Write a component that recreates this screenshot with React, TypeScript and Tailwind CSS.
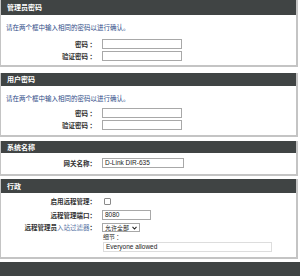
import React from "react"

const font = { fontFamily: '"Noto Sans CJK SC", "Liberation Sans", sans-serif' }

function Header({ title, h }: { title: string; h: string }) {
  return (
    <div className={`${h} bg-[#404444] flex items-center pl-[6px] text-white text-[7px] font-bold leading-none`}>
      {title}
    </div>
  )
}

function Row({ label, children, className = "" }: { label: React.ReactNode; children: React.ReactNode; className?: string }) {
  return (
    <div className={`flex items-center ${className}`}>
      <div className="w-[97px] text-right pr-[2px] text-[6.5px] font-bold text-[#333] leading-none whitespace-nowrap">{label}</div>
      <div className="pl-[4px] flex items-center">{children}</div>
    </div>
  )
}

function Input({ w = "w-[80px]", value = "" }: { w?: string; value?: string }) {
  return (
    <div className={`${w} h-[10px] border border-[#a8a8a8] bg-white flex items-center px-[2px] text-[6.5px] text-[#222] leading-none`} style={{ fontFamily: '"Liberation Sans", sans-serif' }}>
      {value}
    </div>
  )
}

function PasswordBox({ title, first }: { title: string; first?: boolean }) {
  return (
    <div className="w-[298px] border-l border-r-2 border-b-2 border-[#c4c4c4]">
      <Header title={title} h={first ? "h-[15px]" : "h-[13px]"} />
      <div className="pl-[5px] pt-[8px] text-[6.5px] leading-[9px] text-[#2d4a86] h-[17px]">
        请在两个框中输入相同的密码以进行确认。
      </div>
      <div className={first ? "pt-[7px]" : "pt-[5px]"}>
        <Row label="密码 ：">
          <Input />
        </Row>
        <Row label="验证密码 ：" className="mt-[2px]">
          <Input />
        </Row>
      </div>
      <div className={first ? "h-[4px]" : "h-[5px]"} />
    </div>
  )
}

export default function App() {
  return (
    <div className="w-[300px] h-[276px] bg-white overflow-hidden flex flex-col" style={font}>
      <PasswordBox title="管理员密码" first />
      <div className="h-[6px] shrink-0" />
      <PasswordBox title="用户密码" />
      <div className="h-[4px] shrink-0" />

      <div className="w-[298px] border-l border-r-2 border-b-2 border-[#c4c4c4]">
        <Header title="系统名称" h="h-[12px]" />
        <Row label="网关名称：" className="pt-[5px] pb-[6px]">
          <Input value="D-Link DIR-635" w="w-[82px]" />
        </Row>
      </div>
      <div className="h-[3px] shrink-0" />

      <div className="w-[298px] border-l border-r-2 border-b-2 border-[#c4c4c4]">
        <Header title="行政" h="h-[14px]" />
        <Row label="启用远程管理：" className="h-[17px]">
          <div className="w-[7px] h-[7px] border border-[#8a8a8a] bg-white ml-[2px] rounded-[1px]" />
        </Row>
        <Row label="远程管理端口：">
          <Input value="8080" w="w-[49px]" />
        </Row>
        <Row
          label={
            <span>
              远程管理员<span className="font-normal text-[#5a76a6]">入站过滤器</span>：
            </span>
          }
          className="mt-[3px]"
        >
          <div className="w-[38px] h-[9px] border border-[#a8a8a8] bg-white flex items-center justify-between px-[2px] text-[6px] text-[#222] leading-none">
            <span>允许全部</span>
            <svg width="5" height="4" viewBox="0 0 5 4">
              <path d="M0.5 0.8 L2.5 3 L4.5 0.8" fill="none" stroke="#222" strokeWidth="1.1" />
            </svg>
          </div>
        </Row>
        <div className="pl-[102px] mt-[1px] text-[6px] leading-[8px] text-[#333]">细节 ：</div>
        <div className="pl-[102px] mt-[1px]">
          <div className="w-[169px] h-[10px] border border-[#ddd] bg-white flex items-center px-[2px] text-[6.5px] text-[#222] leading-none" style={{ fontFamily: '"Liberation Sans", sans-serif' }}>
            Everyone allowed
          </div>
        </div>
        <div className="h-[5px]" />
      </div>

      <div className="mt-[3px] flex-1 bg-[#404444]" />
    </div>
  )
}
